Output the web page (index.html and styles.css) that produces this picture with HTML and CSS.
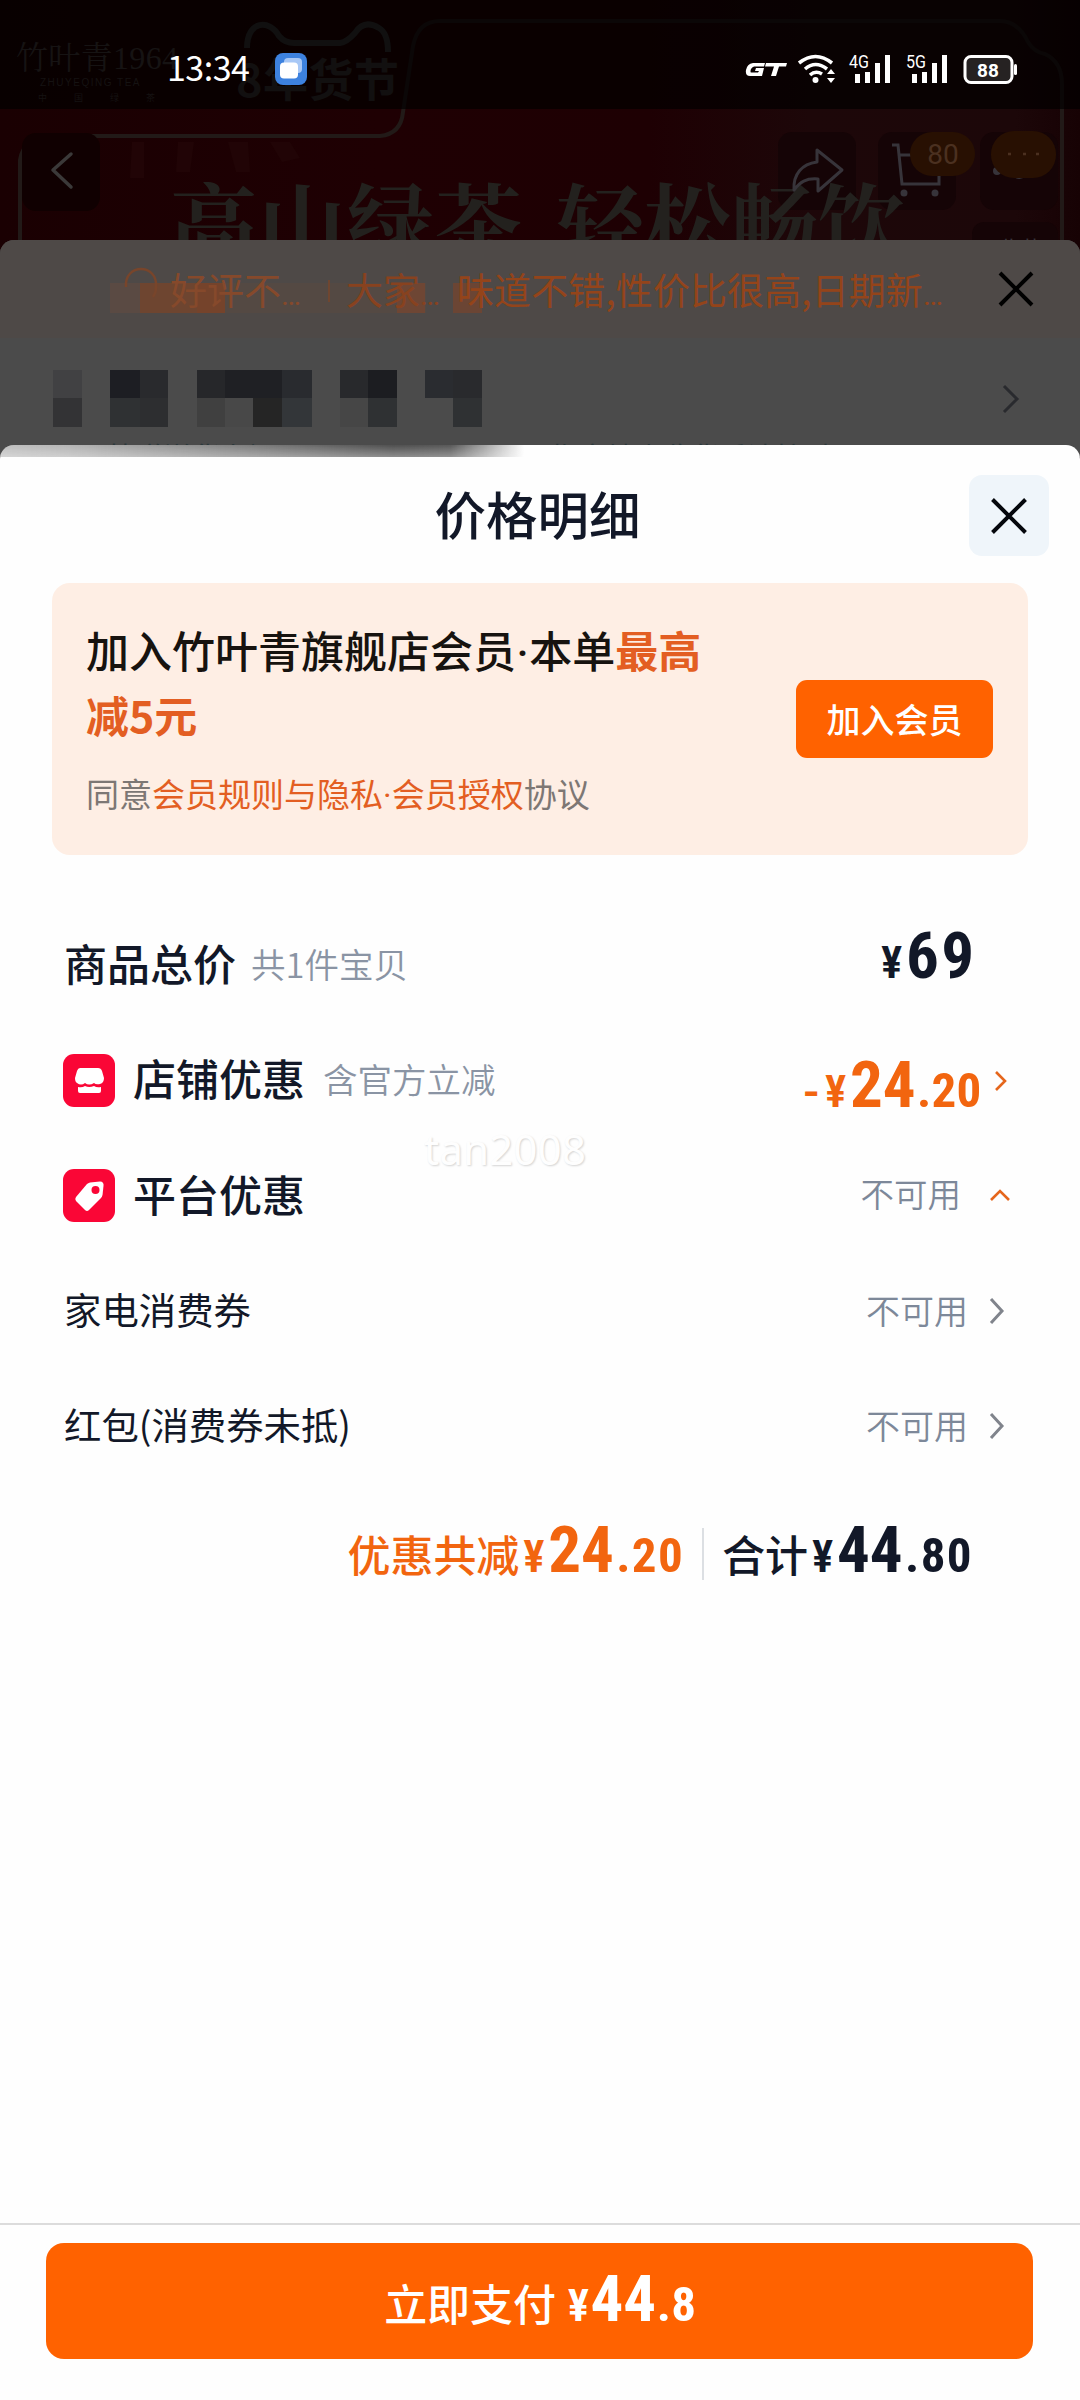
FILE: index.html
```html
<!DOCTYPE html>
<html lang="zh-CN">
<head>
<meta charset="utf-8">
<title>价格明细</title>
<link rel="stylesheet" href="styles.css">
</head>
<body>
<div class="phone">
  <header class="hero">
    <svg class="hero-art" viewBox="0 0 1080 260" width="1080" height="260">
      <defs>
        <linearGradient id="glow" x1="0" x2="1"><stop offset="0" stop-color="#1a0002"/><stop offset=".35" stop-color="#1f0003"/><stop offset=".6" stop-color="#1e0003"/><stop offset=".75" stop-color="#1d0709"/><stop offset=".94" stop-color="#1c0709"/><stop offset="1" stop-color="#170204"/></linearGradient>
      </defs>
      <rect width="1080" height="260" fill="url(#glow)"/>
      <path d="M132 142h12v36h-14zM178 142h16l-4 30h-14zM228 142h20l2 30h-14zM270 142h20l10 16-18 4z" fill="#210406"/>
      <path d="M20 260V160Q24 136 52 136H380Q401 134 403 112L413 46Q418 21 440 21H1000Q1018 21 1028 42Q1034 52 1045 54Q1062 62 1062 84V260" fill="none" stroke="#221a18" stroke-width="4"/>
      <rect x="22" y="133" width="78" height="78" rx="14" fill="#100001"/>
      <rect x="778" y="132" width="78" height="78" rx="14" fill="#150406"/>
      <rect x="878" y="132" width="78" height="78" rx="14" fill="#150406"/>
      <rect x="980" y="132" width="78" height="78" rx="14" fill="#150406"/>
      <text x="170" y="257" font-size="87" textLength="352" class="headline">高山绿茶</text>
      <text x="557" y="257" font-size="87" textLength="348" class="headline">轻松畅饮</text>
      <path d="M71 154L53 170L71 187" fill="none" stroke="#3b3939" stroke-width="3.500" stroke-linecap="round" stroke-linejoin="round"/>
      <path d="M817 150L842 170L818 191V179C806 178 800 182 794 190C793 174 802 164 817 162Z" fill="none" stroke="#37343a" stroke-width="3" stroke-linejoin="round"/>
      <path d="M892 145H898L902 184H939V176M900 155H913" fill="none" stroke="#37343a" stroke-width="3"/>
      <circle cx="904" cy="193" r="3.500" fill="#37343a"/><circle cx="935" cy="193" r="3.500" fill="#37343a"/>
      <rect x="910" y="132" width="65" height="44" rx="22" fill="#281002"/>
      <text x="943" y="164" text-anchor="middle" font-size="28" class="cart-count">80</text>
      <circle cx="997" cy="171" r="4" fill="#37343a"/><path d="M1014 175Q1019 180 1025 175" fill="none" stroke="#37343a" stroke-width="3"/>
      <rect x="991" y="131" width="65" height="47" rx="23" fill="#281002"/>
      <path d="M1008 154h3M1023 154h3M1036 154h3" stroke="#4b3020" stroke-width="2.500"/>
      <rect x="972" y="222" width="86" height="60" rx="12" fill="#150406"/>
      <text x="998" y="257" font-size="22" class="side-label">收藏</text>
      <rect width="1080" height="109" fill="#020000" fill-opacity=".7"/>
      <path d="M247 48C247 20 270 19 279 36Q285 43 294 43H340Q347 42 355 33Q364 19 379 28Q388 33 388 52" fill="none" stroke="#111010" stroke-width="6"/>
      <text x="16" y="69" font-size="32" textLength="162" class="brand">竹叶青1964</text>
      <text x="40" y="86" font-size="10" class="brand-sub">ZHUYEQING TEA</text>
      <text x="38" y="101" font-size="9" class="brand-cn">中国绿茶</text>
      <text x="236" y="97" font-size="45" textLength="163" class="festival">8年货节</text>
    </svg>
    <div class="status">
      <div class="status-left">
        <span class="clock">13:34</span>
        <svg width="32" height="32" viewBox="0 0 32 32"><rect width="32" height="32" rx="8" fill="#3d82df"/><rect x="9" y="5" width="18" height="15" rx="4" fill="#a8c8f6"/><rect x="5" y="9.500" width="18" height="16" rx="4" fill="#fff"/></svg>
      </div>
      <svg class="status-icons" width="276" height="32" viewBox="0 0 276 32">
        <g fill="#fff">
          <path d="M21 9H9Q3 10 2 16Q1 22 6 22H18L20 14H12L11 17H15L14 18.500H7Q6 18 7 15Q8 13 10 12.500H20ZM22 9H43L42 12.500H35L32 22H27L30 12.500H21Z"/>
          <circle cx="71.500" cy="26" r="3"/>
          <rect x="111" y="20" width="5" height="9"/><rect x="121" y="18" width="5" height="11"/><rect x="131" y="9" width="5" height="20"/><rect x="141" y="1" width="5" height="28"/>
          <rect x="168" y="20" width="5" height="9"/><rect x="178" y="18" width="5" height="11"/><rect x="188" y="9" width="5" height="20"/><rect x="198" y="1" width="5" height="28"/>
          <rect x="270" y="10" width="3" height="11" rx="1.500"/>
          <path d="M87 15l4 5h-8zM87 29l-4-5h8z"/>
        </g>
        <g fill="none" stroke="#fff" stroke-width="3.600"><path d="M55 9Q71.500-4 88 9M61 15Q71.500 6 83 15M66 21Q71.500 16 78 20"/><rect x="221" y="2.500" width="47" height="26" rx="6" stroke-width="3" fill="#262222"/></g>
        <text x="105" y="14" font-size="18" textLength="20" lengthAdjust="spacingAndGlyphs" class="net">4G</text>
        <text x="162" y="14" font-size="18" textLength="20" lengthAdjust="spacingAndGlyphs" class="net">5G</text>
        <text x="244" y="22.500" font-size="19" text-anchor="middle" class="battery">88</text>
      </svg>
    </div>
  </header>

  <section class="order">
    <div class="review">
      <svg class="mosaic-warm" width="380" height="30" viewBox="0 0 380 30"><rect width="316" height="30" fill="#544943"/><rect width="30" height="30" fill="#5a4a43"/><rect x="30" width="57" height="30" fill="#6e4530"/><rect x="87" width="28" height="30" fill="#75432b"/><rect x="287" width="28" height="30" fill="#6e4634"/><rect x="343" width="29" height="30" fill="#6b4534"/></svg>
      <svg class="review-ring" width="34" height="38" viewBox="0 0 34 38"><path d="M2 20C0-4 34-4 32 20Q32 26 29 30" fill="none" stroke="#78452b" stroke-width="2.500"/></svg>
      <span class="praise">好评不<i>…</i></span><span class="bar"></span><span class="people">大家<i>…</i></span><span class="quote">味道不错,性价比很高,日期新<i>…</i></span>
      <svg class="order-close" width="36" height="36" viewBox="0 0 36 36"><path d="M2 2L34 34M34 2L2 34" stroke="#000" stroke-width="4"/></svg>
    </div>
    <div class="address">
      <svg width="430" height="57" viewBox="0 0 430 57" shape-rendering="crispEdges">
        <path d="M0 0h29v28H0z" fill="#414143"/><path d="M0 28h29v29H0z" fill="#333335"/>
        <path d="M57 0h30v28H57z" fill="#1d1e23"/><path d="M87 0h28v28H87z" fill="#292a2d"/><path d="M57 28h30v29H57z" fill="#2f3133"/><path d="M87 28h28v29H87z" fill="#2d2e30"/>
        <path d="M144 0h28v28h-28z" fill="#26272a"/><path d="M172 0h57v28h-57z" fill="#1f2024"/><path d="M229 0h30v28h-30z" fill="#292b2f"/><path d="M144 28h28v29h-28z" fill="#404040"/><path d="M172 28h28v29h-28z" fill="#484848"/><path d="M200 28h29v29h-29z" fill="#252525"/><path d="M229 28h30v29h-30z" fill="#333639"/>
        <path d="M287 0h28v28h-28z" fill="#28292c"/><path d="M315 0h29v28h-29z" fill="#1c1d21"/><path d="M287 28h28v29h-28z" fill="#464646"/><path d="M315 28h29v29h-29z" fill="#2f3133"/>
        <path d="M372 0h28v28h-28z" fill="#2a2c30"/><path d="M400 0h29v28h-29z" fill="#292a2d"/><path d="M400 28h29v29h-29z" fill="#2f3133"/>
      </svg>
      <svg width="18" height="30" viewBox="0 0 18 30"><path d="M2 2L15 15L2 28" fill="none" stroke="#292a2e" stroke-width="3"/></svg>
    </div>
    <div class="hint"><span>快递送货上门</span><span>至指定地点收货后请核对</span></div>
  </section>

  <main class="sheet">
    <div class="sheet-shade"></div>
    <div class="sheet-head">
      <h1>价格明细</h1>
      <button class="close"><svg width="38" height="38" viewBox="0 0 38 38"><path d="M2.500 2.500L35.500 35.500M35.500 2.500L2.500 35.500" stroke="#05070c" stroke-width="4"/></svg></button>
    </div>

    <section class="member">
      <div class="member-copy">
        <p class="member-title">加入竹叶青旗舰店会员<i>·</i>本单<b>最高<br>减5元</b></p>
        <p class="member-terms">同意<b>会员规则与隐私<i>·</i>会员授权</b>协议</p>
      </div>
      <button class="join">加入会员</button>
    </section>

    <div class="rows">
      <div class="row first">
        <span class="label">商品总价</span><span class="sub">共1件宝贝</span>
        <span class="price total"><span class="yen">¥</span><span class="int">69</span></span>
      </div>
      <div class="row">
        <svg class="badge" width="52" height="53" viewBox="0 0 52 53"><rect width="52" height="53" rx="11" fill="#fa0636"/><path d="M17 14H35Q38 14 39 17L41 24Q41 29 37 30Q33 31 31 29Q26 32 22 29Q18 32 14 29Q12 28 12 24L14 17Q15 14 17 14Z" fill="#fff"/><path d="M15 33Q19 34 22 32Q26 34 31 32Q34 34 38 33V37Q38 39 36 39H17Q15 39 15 37Z" fill="#fff"/></svg>
        <span class="label">店铺优惠</span><span class="sub">含官方立减</span>
        <span class="price cut"><span class="minus">-</span><span class="yen">¥</span><span class="int">24</span><span class="dec">.20</span></span>
        <svg class="arrow-sm" width="14" height="22" viewBox="0 0 14 22"><path d="M2 2L11 11L2 20" fill="none" stroke="#e5661c" stroke-width="2.600"/></svg>
      </div>
      <div class="row">
        <svg class="badge" width="52" height="53" viewBox="0 0 52 53"><rect width="52" height="53" rx="11" fill="#fa0636"/><path d="M27 13.500L37 12.500Q41 12.500 40.500 17L39.500 26Q39 28 38 29L26 41Q24 43 22 41L13 32Q11.500 30 13 28L24 15Q25 14 27 13.500Z" fill="#fff"/><circle cx="32.500" cy="21" r="4" fill="#fa0636"/></svg>
        <span class="label">平台优惠</span>
        <span class="na open">不可用</span>
        <svg class="arrow-up" width="22" height="14" viewBox="0 0 22 14"><path d="M2 12L11 3L20 12" fill="none" stroke="#e5661c" stroke-width="2.600"/></svg>
      </div>
      <div class="row">
        <span class="item">家电消费券</span>
        <span class="na">不可用</span>
        <svg class="arrow" width="18" height="28" viewBox="0 0 18 28"><path d="M3 2L14 14L3 26" fill="none" stroke="#80848c" stroke-width="3"/></svg>
      </div>
      <div class="row">
        <span class="item">红包(消费券未抵)</span>
        <span class="na">不可用</span>
        <svg class="arrow" width="18" height="28" viewBox="0 0 18 28"><path d="M3 2L14 14L3 26" fill="none" stroke="#80848c" stroke-width="3"/></svg>
      </div>
      <div class="sum">
        <span class="price save"><span class="lead">优惠共减</span><span class="yen">¥</span><span class="int">24</span><span class="dec">.20</span></span>
        <span class="rule"></span>
        <span class="price grand"><span class="lead">合计</span><span class="yen">¥</span><span class="int">44</span><span class="dec">.80</span></span>
      </div>
    </div>
    <span class="watermark">tan2008</span>

    <footer class="pay-bar">
      <button class="pay"><span class="price"><span class="lead">立即支付</span><span class="yen">¥</span><span class="int">44</span><span class="dec">.8</span></span></button>
    </footer>
  </main>
</div>
</body>
</html>
```
FILE: styles.css
```css
* { box-sizing: border-box; }
body { margin: 0; background: #fefefe; font-family: "Noto Sans CJK SC", sans-serif; color: #121828; }
h1, p { margin: 0; }
b, i { font-weight: inherit; font-style: normal; }
button { border: 0; padding: 0; font-family: inherit; }
svg { display: block; flex: none; }
.phone { width: 1080px; height: 2400px; display: flex; flex-direction: column; overflow: hidden; background: #170002; }

/* dimmed shop header */
.hero { position: relative; height: 240px; flex: none; }
.hero-art { position: absolute; top: 0; left: 0; }
.headline { font-family: "Noto Serif CJK SC", "Noto Sans CJK SC", serif; font-weight: 700; fill: #23211e; }
.brand { font-family: "Liberation Serif", "Noto Serif CJK SC", "Noto Sans CJK SC", serif; fill: #161313; }
.brand-sub { font-family: "Liberation Sans", sans-serif; letter-spacing: 1.5px; fill: #151212; }
.brand-cn { letter-spacing: 27px; fill: #151212; }
.festival { font-weight: 700; fill: #121010; }
.cart-count { font-family: Roboto, sans-serif; fill: #4b3020; }
.side-label { fill: #37343a; }
.status { position: relative; display: flex; justify-content: space-between; padding: 52px 61px 0 167px; }
.status-left { display: flex; align-items: center; gap: 27px; height: 34px; color: #fff; }
.clock { font: 400 34px/34px "Noto Sans CJK SC", sans-serif; width: 81px; letter-spacing: -.5px; white-space: nowrap; padding-bottom: 5px; }
.status-icons { margin-top: 2px; margin-right: -1px; }
.net { font-family: Roboto, sans-serif; fill: #fff; }
.battery { font-family: Roboto, sans-serif; font-weight: 700; fill: #fff; }

/* dimmed order sheet */
.order { position: relative; height: 217px; flex: none; margin-bottom: -12px; background: #4b4b4b; border-radius: 14px 14px 0 0; overflow: hidden; }
.review { position: relative; height: 98px; background: #4e4947; display: flex; align-items: center; padding: 0 46px 0 124px; font-size: 37px; color: #94441a; white-space: nowrap; }
.review > * { position: relative; }
.review i { font-family: Roboto, sans-serif; font-size: 30px; }
.review .mosaic-warm { position: absolute; left: 110px; top: 43px; }
.review-ring { margin-top: -6px; }
.praise { width: 144px; margin-left: 12px; color: #86492b; }
.bar { width: 2px; height: 22px; margin: 4px 16px 0 14px; background: #6f4630; }
.people { width: 111px; color: #88421f; }
.quote { flex: 1; letter-spacing: .1px; }
.order-close { margin-top: -1px; }
.address { height: 104px; display: flex; justify-content: space-between; align-items: center; padding: 17px 60px 0 53px; }
.hint { display: flex; justify-content: space-between; width: 735px; margin-left: 108px; font-size: 28px; line-height: 28px; color: #2c393b; }
.hint span:last-child { width: 320px; white-space: nowrap; }

/* price detail sheet */
.sheet { position: relative; flex: 1; display: flex; flex-direction: column; background: #fefefe; border-radius: 14px 14px 0 0; overflow: hidden; }
.sheet-shade { position: absolute; left: 0; top: 0; width: 524px; height: 12px; background: linear-gradient(90deg, rgba(75,75,75,.35), rgba(75,75,75,.4) 12%, rgba(75,75,75,.65) 40%, rgba(70,70,70,.95) 75%, rgba(70,70,70,.9) 86%, rgba(75,75,75,0)); -webkit-mask-image: linear-gradient(#000, rgba(0,0,0,.65)); mask-image: linear-gradient(#000, rgba(0,0,0,.65)); }
.sheet-head { height: 138px; flex: none; display: grid; grid-template-columns: 1fr 80px 31px; align-items: center; padding-top: 3px; }
h1 { font-size: 51.5px; font-weight: 500; line-height: 60px; text-align: center; padding: 0 0 5px 106px; }
.close { width: 80px; height: 81px; border-radius: 13px; background: #eff5fa; display: grid; place-items: center; }
.member { height: 272px; flex: none; margin: 0 52px; padding: 34px 35px 0 34px; border-radius: 18px; background: #feeee4; display: flex; justify-content: space-between; }
.member-title { font-size: 43px; font-weight: 500; line-height: 65px; color: #17130f; white-space: nowrap; }
.member i { font-family: Roboto, sans-serif; line-height: 0; }
.member b { color: #e35e22; }
.member-title b { font-weight: 700; }
.member-title i { margin: 0 .5px; }
.member-terms { margin-top: 22px; font-size: 33px; line-height: 48px; color: #7d7774; white-space: nowrap; }
.join { width: 197px; height: 78px; margin-top: 63px; border-radius: 11px; background: #ff6200; color: #fff; font-size: 34px; font-weight: 500; line-height: 78px; }

.rows { padding: 52px 0 0 63px; }
.row { height: 115.3px; display: flex; align-items: center; }
.label { font-size: 43px; font-weight: 500; line-height: 50px; letter-spacing: 0; white-space: nowrap; padding-bottom: 5px; }
.badge { margin-top: 1px; }
.badge + .label { margin-left: 18px; }
.row.first .label { margin-left: 1px; }
.sub { margin-left: 15px; font-size: 34.500px; font-weight: 350; line-height: 50px; color: #8a94a4; white-space: nowrap; padding-bottom: 3px; }
.badge ~ .sub { margin-left: 18px; }
.item { margin-left: 1px; font-size: 37.4px; line-height: 50px; white-space: nowrap; padding-bottom: 3px; }
.na { margin-left: auto; margin-right: 20px; font-size: 34px; font-weight: 350; line-height: 50px; color: #7d8899; padding-bottom: 2px; }
.na.open { margin-right: 28px; padding-bottom: 4px; font-size: 33.500px; }
.arrow { margin-right: 74px; }
.arrow-up { margin-right: 69px; }
.arrow-sm { margin: 2px 72px 0 16px; }

.price { display: flex; align-items: baseline; font-family: Roboto, sans-serif; font-weight: 700; font-stretch: 75%; line-height: 70px; white-space: nowrap; }
.row .price { margin-left: auto; }
.yen { font-size: 45px; width: 25px; font-weight: 600; letter-spacing: -2px; }
.int { font-size: 65px; width: 67px; }
.dec { font-size: 49px; width: 61px; letter-spacing: .3px; }
.minus { font-size: 45px; width: 22px; font-weight: 600; font-stretch: 100%; }
.price.total { margin-right: 103px; margin-top: -10px; }
.total .int { width: 71px; letter-spacing: 2.5px; }
.price.cut { color: #f2650f; margin-top: 18px; }
.lead { font-family: "Noto Sans CJK SC", sans-serif; font-size: 43px; font-weight: 500; font-stretch: 100%; letter-spacing: -.1px; margin-right: 4px; }
.sum { height: 140px; display: flex; align-items: center; justify-content: flex-end; padding-right: 108px; }
.save { color: #f2650f; }
.rule { width: 2px; height: 52px; margin: 2px 18px 0 19px; background: #dcdfe3; }
.sum .dec { width: 67px; letter-spacing: 1.4px; }
.sum .int { width: 68px; }
.watermark { position: absolute; left: 424px; top: 676px; font: 41.8px/56px "Noto Sans", sans-serif; letter-spacing: .3px; color: #fefefe; text-shadow: 1px 1px 2px #d4d4d4; }
.pay-bar { margin-top: auto; height: 177px; border-top: 2px solid #dcdcdc; padding: 18px 47px 0 46px; }
.pay { width: 100%; height: 116px; border-radius: 18px; background: #ff6200; color: #fff; display: flex; justify-content: center; }
.pay .price { line-height: 113px; }
.pay .lead { margin-right: 9px; }
.pay .dec { width: 38px; }
```
